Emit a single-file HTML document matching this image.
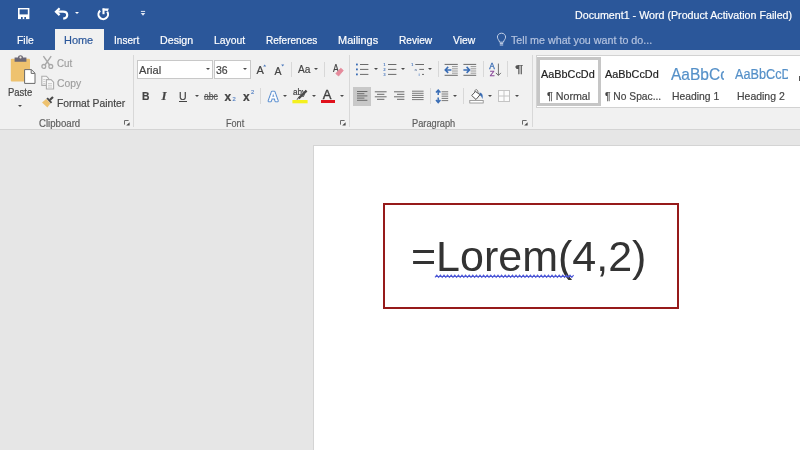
<!DOCTYPE html>
<html><head><meta charset="utf-8">
<style>
html,body{margin:0;padding:0;}
body{width:800px;height:450px;overflow:hidden;position:relative;background:#e6e6e6;font-family:"Liberation Sans",sans-serif;}
.abs{position:absolute;}
.t{position:absolute;white-space:nowrap;line-height:1;transform-origin:0 50%;-webkit-text-stroke:0.2px currentColor;}
svg{position:absolute;overflow:visible;}
#title{left:0;top:0;width:800px;height:50px;background:#2b579a;}
#ribbon{left:0;top:50px;width:800px;height:79px;background:#f1f1f1;border-bottom:1px solid #d4d4d4;}
#hometab{left:55px;top:29px;width:49px;height:22px;background:#f1f1f1;}
.sep{position:absolute;width:1px;background:#d8d8d8;}
#page{left:313px;top:145px;width:487px;height:304px;background:#fff;border-left:1px solid #d4d4d4;border-top:1px solid #d4d4d4;}
#box{left:383px;top:203px;width:292px;height:101.5px;border:2px solid #961a1a;}
#doc{left:411px;top:235px;font-size:43px;color:#333;-webkit-text-stroke:0;}
.dd{position:absolute;width:0;height:0;border-left:2.4px solid transparent;border-right:2.4px solid transparent;border-top:2.8px solid #4a4a4a;}
</style></head><body>
<div id="root" style="position:absolute;left:0;top:0;width:800px;height:450px;will-change:transform;">
<div id="title" class="abs"></div>
<div id="hometab" class="abs"></div>
<div id="ribbon" class="abs"></div>
<!-- quick access -->
<svg style="left:17px;top:7px" width="14" height="14" viewBox="0 0 14 14">
 <path d="M1 1 H12.4 V12.1 H1 Z" fill="#fff"/>
 <rect x="2.6" y="2.4" width="8.2" height="5" fill="#2b579a"/>
 <rect x="4" y="10" width="1.7" height="2.1" fill="#2b579a"/>
 <rect x="7.3" y="10" width="1.7" height="2.1" fill="#2b579a"/>
</svg>
<svg style="left:54px;top:7px" width="16" height="14" viewBox="0 0 16 14">
 <path d="M5.6 1.3 L2 4.7 L5.6 8.1" fill="none" stroke="#fff" stroke-width="2.2"/>
 <path d="M2.2 4.7 H9 C11.8 4.7 13.2 6.4 13.2 8 C13.2 9.9 11.8 11.3 9.2 11.7" fill="none" stroke="#fff" stroke-width="2.2"/>
</svg>
<div class="dd" style="left:75px;top:12px;border-top-color:#fff;"></div>
<svg style="left:96px;top:6px" width="14" height="15" viewBox="0 0 14 15">
 <path d="M11.2 5.6 A4.8 4.8 0 1 1 4.2 4.6" fill="none" stroke="#fff" stroke-width="2.1"/>
 <path d="M7.5 2.4 V8.2" fill="none" stroke="#fff" stroke-width="2.1"/>
 <path d="M6.5 2.4 H12.9 L11.8 5 L7 4.4Z" fill="#fff"/>
</svg>
<svg style="left:140px;top:10px" width="6" height="7" viewBox="0 0 6 7">
 <rect x="0.9" y="0.9" width="4.2" height="1" fill="#e3e9f4"/>
 <path d="M0.7 3.1 H5.3 L3 5.7 Z" fill="#e3e9f4"/>
</svg>
<!-- lightbulb -->
<svg style="left:496px;top:32px" width="11" height="16" viewBox="0 0 11 16">
 <path d="M5.5 1.2 C2.9 1.2 1.4 3.1 1.4 5.1 C1.4 7 3.2 8.2 3.6 10.2 H7.4 C7.8 8.2 9.6 7 9.6 5.1 C9.6 3.1 8.1 1.2 5.5 1.2 Z" fill="none" stroke="#c5d1e7" stroke-width="1"/>
 <path d="M3.8 11.6 H7.2 M3.8 13 H7.2" stroke="#c5d1e7" stroke-width="1"/>
</svg>
<!-- clipboard group -->
<svg style="left:10px;top:55px" width="27" height="30" viewBox="0 0 27 30">
 <rect x="0.8" y="3.8" width="19.2" height="22.6" rx="1" fill="#eec26f"/>
 <path d="M4.6 6.8 V2.6 H8 C8 -0.6 13 -0.6 13 2.6 H16.4 V6.8 Z" fill="#6b6775"/>
 <circle cx="10.5" cy="2.4" r="1.1" fill="#efe9dc"/>
 <path d="M14.6 14.6 H21.4 L25 18.2 V28.4 H14.6 Z" fill="#fff" stroke="#6a6a6a" stroke-width="1"/>
 <path d="M21.2 14.8 V18.4 H24.8" fill="none" stroke="#6a6a6a" stroke-width="1"/>
</svg>
<div class="dd" style="left:18.4px;top:104.5px;"></div>
<!-- cut -->
<svg style="left:41px;top:55px" width="13" height="15" viewBox="0 0 13 15">
 <path d="M2.4 1.2 L8.6 10 M10.2 1.2 L4 10" fill="none" stroke="#a8a8a8" stroke-width="1.4"/>
 <circle cx="2.8" cy="11.4" r="1.9" fill="none" stroke="#a8a8a8" stroke-width="1.3"/>
 <circle cx="9.8" cy="11.4" r="1.9" fill="none" stroke="#a8a8a8" stroke-width="1.3"/>
</svg>
<!-- copy -->
<svg style="left:41px;top:75px" width="14" height="15" viewBox="0 0 14 15">
 <path d="M0.8 1.2 H5.4 L7.6 3.4 V10.4 H0.8 Z" fill="#f7f7f7" stroke="#adadad" stroke-width="1.1"/>
 <path d="M5.4 4.6 H10 L12.6 7.2 V14 H5.4 Z" fill="#f7f7f7" stroke="#adadad" stroke-width="1.1"/>
 <path d="M2.2 4.5 H4.4 M2.2 6.5 H4.4 M2.2 8.5 H4.4 M7 8.5 H11 M7 10.3 H11 M7 12.1 H11" stroke="#c4c4c4" stroke-width="0.8"/>
</svg>
<!-- format painter -->
<svg style="left:41px;top:96px" width="14" height="13" viewBox="0 0 14 13">
 <path d="M1 6.6 L5.2 3 L9.4 7.6 L6.4 11.4 Z" fill="#eec26f"/>
 <path d="M5.4 2.6 L6.8 1.4 L11.2 6.2 L9.8 7.6 Z" fill="#4a4a4a"/>
 <path d="M8.8 4 L12 1" stroke="#4a4a4a" stroke-width="2.2"/>
</svg>
<!-- launchers -->
<svg style="left:124px;top:120px" width="6" height="6" viewBox="0 0 6 6"><path d="M0.5 4.6 V0.5 H4.6" fill="none" stroke="#6a6a6a" stroke-width="1"/><path d="M2.2 5.6 H5.6 V2.2 Z" fill="#4a4a4a"/></svg>
<svg style="left:339.6px;top:120px" width="6" height="6" viewBox="0 0 6 6"><path d="M0.5 4.6 V0.5 H4.6" fill="none" stroke="#6a6a6a" stroke-width="1"/><path d="M2.2 5.6 H5.6 V2.2 Z" fill="#4a4a4a"/></svg>
<svg style="left:522px;top:120px" width="6" height="6" viewBox="0 0 6 6"><path d="M0.5 4.6 V0.5 H4.6" fill="none" stroke="#6a6a6a" stroke-width="1"/><path d="M2.2 5.6 H5.6 V2.2 Z" fill="#4a4a4a"/></svg>
<!-- group separators -->
<div class="sep" style="left:133px;top:55px;height:72px;"></div>
<div class="sep" style="left:349px;top:55px;height:72px;"></div>
<div class="sep" style="left:532px;top:55px;height:72px;"></div>
<!-- font group -->
<div class="abs" style="left:137px;top:60px;width:76px;height:19px;background:#fff;border:1px solid #c8c8c8;box-sizing:border-box;"></div>
<div class="abs" style="left:214px;top:60px;width:37px;height:19px;background:#fff;border:1px solid #c8c8c8;box-sizing:border-box;"></div>
<div class="dd" style="left:205.5px;top:68px;"></div>
<div class="dd" style="left:242.5px;top:68px;"></div>
<div class="t" style="left:256.5px;top:65px;font-size:11px;color:#444;">A</div>
<svg style="left:263.2px;top:63.6px" width="4" height="4" viewBox="0 0 4 4"><path d="M0.2 2.4 L1.7 0.4 L3.2 2.4Z" fill="#4a78bc"/></svg>
<div class="t" style="left:274.5px;top:66px;font-size:10.5px;color:#444;">A</div>
<svg style="left:280.8px;top:63.8px" width="4" height="4" viewBox="0 0 4 4"><path d="M0.2 0.4 L1.7 2.4 L3.2 0.4Z" fill="#4a78bc"/></svg>
<div class="sep" style="left:291px;top:62px;height:15px;"></div>
<div class="t" style="left:298px;top:64.2px;font-size:11.5px;color:#444;transform:scaleX(0.88);">Aa</div>
<div class="dd" style="left:313.5px;top:68px;"></div>
<div class="sep" style="left:324px;top:62px;height:15px;"></div>
<div class="t" style="left:332.7px;top:62.7px;font-size:10.8px;color:#444;transform:scaleX(0.8);">A</div>
<svg style="left:334px;top:66px" width="13" height="12" viewBox="0 0 13 12"><path d="M1.8 7.6 L6.8 2.2 L9.3 4.5 L4.6 10 Z" fill="#e58a9b" stroke="#e58a9b" stroke-width="0.8" stroke-linejoin="round"/></svg>
<!-- row 2 -->
<div class="t" style="left:142px;top:90.5px;font-size:11.5px;font-weight:bold;color:#444;transform:scaleX(0.9);">B</div>
<div class="t" style="left:161.6px;top:89px;font-size:13px;font-style:italic;font-weight:bold;color:#444;font-family:'Liberation Serif',serif;">I</div>
<div class="t" style="left:179px;top:90.5px;font-size:11.5px;color:#444;transform:scaleX(0.92);">U</div>
<div class="abs" style="left:179px;top:101px;width:8px;height:1px;background:#444;"></div>
<div class="dd" style="left:194.6px;top:95px;"></div>
<div class="t" style="left:204px;top:91px;font-size:10.5px;color:#555;transform:scaleX(0.82);text-decoration:line-through;">abc</div>
<div class="t" style="left:224.5px;top:90.5px;font-size:12px;font-weight:bold;color:#444;">x</div>
<div class="t" style="left:232.4px;top:97px;font-size:5.8px;color:#5b86c6;">2</div>
<div class="t" style="left:243px;top:90.5px;font-size:12px;font-weight:bold;color:#444;">x</div>
<div class="t" style="left:251px;top:90px;font-size:5.8px;color:#5b86c6;">2</div>
<div class="sep" style="left:260px;top:88px;height:16px;"></div>
<svg style="left:266px;top:89px" width="14" height="15" viewBox="0 0 14 15">
 <text x="7.3" y="12" font-family="Liberation Sans, sans-serif" font-weight="bold" font-size="13" text-anchor="middle" fill="#5b8fd0" stroke="#5b8fd0" stroke-width="2.4" stroke-linejoin="round">A</text>
 <text x="7.3" y="12" font-family="Liberation Sans, sans-serif" font-weight="bold" font-size="13" text-anchor="middle" fill="#fff" stroke="#fff" stroke-width="0.3">A</text>
</svg>
<div class="dd" style="left:283px;top:95px;"></div>
<div class="t" style="left:293px;top:88px;font-size:9px;color:#444;transform:scaleX(0.9);">aby</div>
<svg style="left:292px;top:89px" width="17" height="16" viewBox="0 0 17 16">
 <path d="M14.6 1.6 L6.6 9.4" stroke="#4a4a4a" stroke-width="2.2"/>
 <path d="M6.8 8 L4.4 10.6 L6 10.4 Z" fill="#4a4a4a"/>
 <rect x="0.4" y="11" width="15.2" height="3.3" fill="#f4f01e"/>
</svg>
<div class="dd" style="left:311.5px;top:95px;"></div>
<div class="t" style="left:322.7px;top:88px;font-size:13px;color:#3c3c3c;-webkit-text-stroke:0.35px #3c3c3c;">A</div>
<div class="abs" style="left:321px;top:100px;width:14px;height:3px;background:#e0111c;"></div>
<div class="dd" style="left:339.5px;top:95px;"></div>
<!-- paragraph group row1 -->
<svg style="left:355px;top:62px" width="15" height="15" viewBox="0 0 15 15">
 <g fill="#3a6db5"><rect x="1" y="1.6" width="1.8" height="1.8"/><rect x="1" y="6.5" width="1.8" height="1.8"/><rect x="1" y="11.5" width="1.8" height="1.8"/></g>
 <path d="M5 2.5 H13.4 M5 7.4 H13.4 M5 12.4 H13.4" stroke="#6a6a6a" stroke-width="1"/>
</svg>
<div class="dd" style="left:373.5px;top:68px;"></div>
<svg style="left:382px;top:62px" width="15" height="15" viewBox="0 0 15 15">
 <g font-family="Liberation Sans, sans-serif" font-size="4.4" font-weight="bold" fill="#4f7cc0"><text x="1.2" y="4.1">1</text><text x="1.2" y="9.1">2</text><text x="1.2" y="14.1">3</text></g>
 <path d="M6 2.5 H14.4 M6 7.4 H14.4 M6 12.4 H14.4" stroke="#6a6a6a" stroke-width="1"/>
</svg>
<div class="dd" style="left:401px;top:68px;"></div>
<svg style="left:410px;top:62px" width="15" height="15" viewBox="0 0 15 15">
 <g font-family="Liberation Sans, sans-serif" font-size="4.4" font-weight="bold" fill="#4f7cc0"><text x="1" y="4.1">1</text><text x="4.4" y="9.1" fill="#7a8fb0">a</text><text x="8.6" y="14.1">i</text></g>
 <path d="M5.3 2.5 H14 M9.3 7.4 H14 M12 12.4 H14" stroke="#6a6a6a" stroke-width="1"/>
</svg>
<div class="dd" style="left:428px;top:68px;"></div>
<div class="sep" style="left:438px;top:61px;height:16px;"></div>
<svg style="left:444px;top:63px" width="15" height="14" viewBox="0 0 15 14">
 <path d="M0.6 1.4 H13.8 M0.6 12.3 H13.8" stroke="#6a6a6a" stroke-width="1"/>
 <path d="M8 3.6 H13.8 M8 5.8 H13.8 M8 8 H13.8 M8 10.2 H13.8" stroke="#9a9a9a" stroke-width="1"/>
 <path d="M1.4 6.9 H7.4 M4.2 3.9 L1.2 6.9 L4.2 9.9" fill="none" stroke="#3a6db5" stroke-width="1.5"/>
</svg>
<svg style="left:463px;top:63px" width="15" height="14" viewBox="0 0 15 14">
 <path d="M0.4 1.4 H13.2 M0.4 12.3 H13.2" stroke="#6a6a6a" stroke-width="1"/>
 <path d="M7.6 3.6 H13.2 M7.6 5.8 H13.2 M7.6 8 H13.2 M7.6 10.2 H13.2" stroke="#9a9a9a" stroke-width="1"/>
 <path d="M0.4 6.9 H6.2 M3.6 3.9 L6.6 6.9 L3.6 9.9" fill="none" stroke="#3a6db5" stroke-width="1.5"/>
</svg>
<div class="sep" style="left:483px;top:61px;height:16px;"></div>
<svg style="left:488px;top:62px" width="16" height="16" viewBox="0 0 16 16">
 <text x="1.3" y="7.1" font-family="Liberation Sans, sans-serif" font-size="8.3" fill="#3a6db5" stroke="#3a6db5" stroke-width="0.3">A</text>
 <text x="1.7" y="13.9" font-family="Liberation Sans, sans-serif" font-size="7.8" fill="#8a4a9a" stroke="#8a4a9a" stroke-width="0.3">Z</text>
 <path d="M10.4 1.6 V13.2 M7.9 10.9 L10.4 13.5 L12.9 10.9" fill="none" stroke="#6e6e6e" stroke-width="1"/>
</svg>
<div class="sep" style="left:507px;top:61px;height:16px;"></div>
<div class="t" style="left:514.6px;top:63.6px;font-size:11.5px;color:#555;transform:scaleX(1.36);">¶</div>
<!-- paragraph row2 -->
<div class="abs" style="left:353px;top:87px;width:18px;height:19px;background:#c8c8c8;"></div>
<svg style="left:356px;top:90px" width="13" height="12" viewBox="0 0 13 12">
 <path d="M1 1.5 H11.4 M1 3.7 H8.4 M1 5.9 H11.4 M1 8.1 H8.4 M1 10.3 H11.4" stroke="#6a6a6a" stroke-width="1"/>
</svg>
<svg style="left:374px;top:90px" width="14" height="12" viewBox="0 0 14 12">
 <path d="M0.8 1.8 H12.6 M3 4.3 H10.4 M0.8 6.8 H12.6 M3 9.3 H10.4" stroke="#6a6a6a" stroke-width="1"/>
</svg>
<svg style="left:393px;top:90px" width="13" height="12" viewBox="0 0 13 12">
 <path d="M1 1.8 H11.4 M4 4.3 H11.4 M1 6.8 H11.4 M4 9.3 H11.4" stroke="#6a6a6a" stroke-width="1"/>
</svg>
<svg style="left:411px;top:90px" width="14" height="12" viewBox="0 0 14 12">
 <path d="M1 1.2 H12.6 M1 3.3 H12.6 M1 5.4 H12.6 M1 7.5 H12.6 M1 9.6 H12.6" stroke="#7a7a7a" stroke-width="1"/>
</svg>
<div class="sep" style="left:430px;top:88px;height:16px;"></div>
<svg style="left:435px;top:89px" width="15" height="15" viewBox="0 0 15 15">
 <path d="M3.2 1.6 V6 M1 3.6 L3.2 1.2 L5.4 3.6 M3.2 8.4 V13.2 M1 11 L3.2 13.6 L5.4 11" fill="none" stroke="#3a6db5" stroke-width="1.5"/>
 <path d="M6.6 2.8 H13.2 M6.6 5 H13.2 M6.6 7.2 H13.2 M6.6 9.4 H13.2 M6.6 11.6 H13.2" stroke="#7a7a7a" stroke-width="1"/>
</svg>
<div class="dd" style="left:453px;top:95px;"></div>
<div class="sep" style="left:463px;top:88px;height:16px;"></div>
<svg style="left:469px;top:88px" width="16" height="16" viewBox="0 0 16 16">
 <path d="M10.6 4.4 C13.2 5 14.4 7 13.4 11 C12.8 9 12 7.8 10.6 7.2 Z" fill="#3a6db5"/>
 <path d="M2.7 7.5 L6.5 3.5 L11 6.7 L7 11.5 Z" fill="#fff" stroke="#555" stroke-width="1"/>
 <path d="M5.7 4.6 C5.5 0.6 8.9 0.6 9.1 4.8" fill="none" stroke="#666" stroke-width="0.9"/>
 <rect x="0.8" y="12.4" width="13.4" height="2.6" fill="#fff" stroke="#8a8a8a" stroke-width="0.8"/>
</svg>
<div class="dd" style="left:487.5px;top:95px;"></div>
<svg style="left:497px;top:89px" width="14" height="14" viewBox="0 0 14 14">
 <rect x="1.5" y="1.5" width="11" height="11" fill="#fbfbfb" stroke="#c4c4c4" stroke-width="1"/>
 <path d="M7 1.5 V12.5 M1.5 7 H12.5" stroke="#c4c4c4" stroke-width="1"/>
</svg>
<div class="dd" style="left:515px;top:95px;"></div>
<!-- styles gallery -->
<div class="abs" style="left:536px;top:55px;width:270px;height:53px;background:#fff;border:1px solid #d2d2d2;box-sizing:border-box;"></div>
<div class="abs" style="left:537px;top:57px;width:64px;height:49px;border:3px solid #c6c6c6;box-sizing:border-box;background:#fff;"></div>
<div class="abs" style="left:670px;top:62px;width:53.5px;height:24px;overflow:hidden;"><div class="t" style="left:0.5px;top:4px;font-size:17px;color:#5590c8;transform:scaleX(0.913);transform-origin:0 50%;">AaBbCcDd</div></div>
<div class="abs" style="left:734px;top:62px;width:53.5px;height:24px;overflow:hidden;"><div class="t" style="left:1px;top:4.9px;font-size:14px;color:#5590c8;transform:scaleX(0.905);transform-origin:0 50%;">AaBbCcDd</div></div>
<div class="abs" style="left:799px;top:76px;width:1px;height:5px;background:#555;"></div>

<div class="t" style="left:574.7px;top:9.9px;font-size:11.5px;color:#ffffff;transform:scaleX(0.929);">Document1 - Word (Product Activation Failed)</div>
<div class="t" style="left:17.4px;top:35.2px;font-size:11.5px;color:#ffffff;transform:scaleX(0.901);">File</div>
<div class="t" style="left:63.7px;top:35.2px;font-size:11.5px;color:#2b579a;transform:scaleX(0.952);">Home</div>
<div class="t" style="left:113.7px;top:35.2px;font-size:11.5px;color:#ffffff;transform:scaleX(0.876);">Insert</div>
<div class="t" style="left:159.7px;top:35.2px;font-size:11.5px;color:#ffffff;transform:scaleX(0.927);">Design</div>
<div class="t" style="left:213.7px;top:35.2px;font-size:11.5px;color:#ffffff;transform:scaleX(0.904);">Layout</div>
<div class="t" style="left:265.7px;top:35.2px;font-size:11.5px;color:#ffffff;transform:scaleX(0.871);">References</div>
<div class="t" style="left:337.7px;top:35.2px;font-size:11.5px;color:#ffffff;transform:scaleX(0.953);">Mailings</div>
<div class="t" style="left:398.7px;top:35.2px;font-size:11.5px;color:#ffffff;transform:scaleX(0.880);">Review</div>
<div class="t" style="left:452.7px;top:35.2px;font-size:11.5px;color:#ffffff;transform:scaleX(0.898);">View</div>
<div class="t" style="left:510.7px;top:35.2px;font-size:11.5px;color:#b4c3df;transform:scaleX(0.932);">Tell me what you want to do...</div>
<div class="t" style="left:7.7px;top:87.0px;font-size:11.5px;color:#444444;transform:scaleX(0.823);">Paste</div>
<div class="t" style="left:56.7px;top:58.0px;font-size:11.5px;color:#9e9e9e;transform:scaleX(0.849);">Cut</div>
<div class="t" style="left:56.7px;top:78.0px;font-size:11.5px;color:#9e9e9e;transform:scaleX(0.901);">Copy</div>
<div class="t" style="left:56.7px;top:98.0px;font-size:11.5px;color:#444444;transform:scaleX(0.897);">Format Painter</div>
<div class="t" style="left:38.7px;top:117.7px;font-size:10.5px;color:#5e5e5e;transform:scaleX(0.917);">Clipboard</div>
<div class="t" style="left:225.7px;top:117.7px;font-size:10.5px;color:#5e5e5e;transform:scaleX(0.866);">Font</div>
<div class="t" style="left:411.7px;top:117.7px;font-size:10.5px;color:#5e5e5e;transform:scaleX(0.881);">Paragraph</div>
<div class="t" style="left:138.7px;top:65.0px;font-size:11.5px;color:#444444;transform:scaleX(0.965);">Arial</div>
<div class="t" style="left:215.7px;top:65.0px;font-size:11.5px;color:#444444;transform:scaleX(0.914);">36</div>
<div class="t" style="left:541.2px;top:69.2px;font-size:11.5px;color:#222;transform:scaleX(0.944);">AaBbCcDd</div>
<div class="t" style="left:546.7px;top:90.5px;font-size:11.5px;color:#444444;transform:scaleX(0.930);">¶ Normal</div>
<div class="t" style="left:605.2px;top:69.2px;font-size:11.5px;color:#222;transform:scaleX(0.944);">AaBbCcDd</div>
<div class="t" style="left:604.7px;top:90.5px;font-size:11.5px;color:#444444;transform:scaleX(0.891);">¶ No Spac...</div>
<div class="t" style="left:672.2px;top:90.5px;font-size:11.5px;color:#444444;transform:scaleX(0.900);">Heading 1</div>
<div class="t" style="left:736.7px;top:90.5px;font-size:11.5px;color:#444444;transform:scaleX(0.910);">Heading 2</div>
<div id="page" class="abs"></div>
<div id="box" class="abs"></div>
<div id="doc" class="t">=Lorem(4,2)</div>
<svg style="left:434.5px;top:274px" width="140" height="5" viewBox="0 0 140 5"><path d="M0 3.4 l1.8 -2.2 l1.8 2.2 l1.8 -2.2 l1.8 2.2 l1.8 -2.2 l1.8 2.2 l1.8 -2.2 l1.8 2.2 l1.8 -2.2 l1.8 2.2 l1.8 -2.2 l1.8 2.2 l1.8 -2.2 l1.8 2.2 l1.8 -2.2 l1.8 2.2 l1.8 -2.2 l1.8 2.2 l1.8 -2.2 l1.8 2.2 l1.8 -2.2 l1.8 2.2 l1.8 -2.2 l1.8 2.2 l1.8 -2.2 l1.8 2.2 l1.8 -2.2 l1.8 2.2 l1.8 -2.2 l1.8 2.2 l1.8 -2.2 l1.8 2.2 l1.8 -2.2 l1.8 2.2 l1.8 -2.2 l1.8 2.2 l1.8 -2.2 l1.8 2.2 l1.8 -2.2 l1.8 2.2 l1.8 -2.2 l1.8 2.2 l1.8 -2.2 l1.8 2.2 l1.8 -2.2 l1.8 2.2 l1.8 -2.2 l1.8 2.2 l1.8 -2.2 l1.8 2.2 l1.8 -2.2 l1.8 2.2 l1.8 -2.2 l1.8 2.2 l1.8 -2.2 l1.8 2.2 l1.8 -2.2 l1.8 2.2 l1.8 -2.2 l1.8 2.2 l1.8 -2.2 l1.8 2.2 l1.8 -2.2 l1.8 2.2 l1.8 -2.2 l1.8 2.2 l1.8 -2.2 l1.8 2.2 l1.8 -2.2 l1.8 2.2 l1.8 -2.2 l1.8 2.2 l1.8 -2.2 l1.8 2.2 l1.8 -2.2 l1.8 2.2 l1.8 -2.2" fill="none" stroke="#4d58d6" stroke-width="1.1"/></svg>

</div>
</body></html>
